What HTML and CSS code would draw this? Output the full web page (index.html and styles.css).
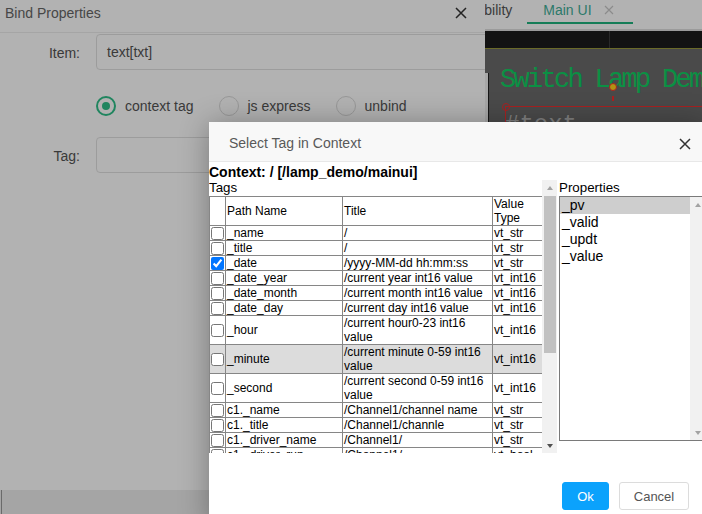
FILE: index.html
```html
<!DOCTYPE html>
<html>
<head>
<meta charset="utf-8">
<title>Bind Properties</title>
<link rel="stylesheet" href="styles.css">
</head>
<body>
<div class="app">
  <div class="tabbar">
    <div class="tab">Visibility</div>
    <div class="tab active">Main UI<svg class="tab-x" width="10" height="10" viewBox="0 0 10 10"><path d="M1 1L9 9M9 1L1 9" stroke="#c8c8c8" stroke-width="1.2"/></svg></div>
  </div>
  <div class="left-panel"><div class="left-line"></div></div>
  <div class="editor">
    <div class="toolbar"><div class="tb-left"></div><div class="tb-right"></div></div>
    <div class="canvas">
      <div class="canvas-edge"></div>
      <div class="demo-title">Switch Lamp Demo</div>
      <div class="anchor"></div>
      <div class="anchor-dash"></div>
      <div class="sel-box"></div>
      <div class="sel-handle"></div>
      <div class="demo-text">#text</div>
    </div>
  </div>
</div>

<div class="bind-dialog">
  <div class="bind-header">
    <span class="bind-title">Bind Properties</span>
    <svg class="bind-close" width="12" height="12" viewBox="0 0 12 12"><path d="M1 1L11 11M11 1L1 11" stroke="#333" stroke-width="1.5"/></svg>
  </div>
  <div class="form-row item-row">
    <span class="form-label">Item:</span>
    <div class="form-input">text[txt]</div>
  </div>
  <div class="radio-row">
    <span class="radio checked"><span class="ring"></span>context tag</span>
    <span class="radio"><span class="ring"></span>js express</span>
    <span class="radio"><span class="ring"></span>unbind</span>
  </div>
  <div class="form-row tag-row">
    <span class="form-label">Tag:</span>
    <div class="form-input"></div>
  </div>
</div>

<div class="mask"></div>

<div class="tag-dialog">
  <div class="td-header">
    <span class="td-title">Select Tag in Context</span>
    <svg class="td-close" width="12" height="12" viewBox="0 0 12 12"><path d="M1 1L11 11M11 1L1 11" stroke="#333" stroke-width="1.5"/></svg>
  </div>
  <div class="td-body">
    <div class="context-line">Context: / [/lamp_demo/mainui]</div>
    <div class="td-columns">
      <div class="tags-pane">
        <div class="tags-view">
          <div class="section-label">Tags</div>
          <table class="tag-table">
            <colgroup><col class="c-check"><col class="c-path"><col class="c-title"><col class="c-type"></colgroup>
            <thead>
              <tr><th></th><th>Path Name</th><th>Title</th><th>Value Type</th></tr>
            </thead>
            <tbody>
              <tr><td><input type="checkbox"></td><td>_name</td><td>/</td><td>vt_str</td></tr>
              <tr><td><input type="checkbox"></td><td>_title</td><td>/</td><td>vt_str</td></tr>
              <tr><td><input type="checkbox" checked></td><td>_date</td><td>/yyyy-MM-dd hh:mm:ss</td><td>vt_str</td></tr>
              <tr><td><input type="checkbox"></td><td>_date_year</td><td>/current year int16 value</td><td>vt_int16</td></tr>
              <tr><td><input type="checkbox"></td><td>_date_month</td><td>/current month int16 value</td><td>vt_int16</td></tr>
              <tr><td><input type="checkbox"></td><td>_date_day</td><td>/current day int16 value</td><td>vt_int16</td></tr>
              <tr><td><input type="checkbox"></td><td>_hour</td><td>/current hour0-23 int16 value</td><td>vt_int16</td></tr>
              <tr class="hl"><td><input type="checkbox"></td><td>_minute</td><td>/current minute 0-59 int16 value</td><td>vt_int16</td></tr>
              <tr><td><input type="checkbox"></td><td>_second</td><td>/current second 0-59 int16 value</td><td>vt_int16</td></tr>
              <tr><td><input type="checkbox"></td><td>c1._name</td><td>/Channel1/channel name</td><td>vt_str</td></tr>
              <tr><td><input type="checkbox"></td><td>c1._title</td><td>/Channel1/channle</td><td>vt_str</td></tr>
              <tr><td><input type="checkbox"></td><td>c1._driver_name</td><td>/Channel1/</td><td>vt_str</td></tr>
              <tr><td><input type="checkbox"></td><td>c1._driver_run</td><td>/Channel1/</td><td>vt_bool</td></tr>
              <tr><td><input type="checkbox"></td><td>c1._conn_st</td><td>/Channel1/</td><td>vt_bool</td></tr>
              <tr><td><input type="checkbox"></td><td>c1.d1._name</td><td>/Channel1/Device1/</td><td>vt_str</td></tr>
              <tr><td><input type="checkbox"></td><td>c1.d1._title</td><td>/Channel1/Device1/</td><td>vt_str</td></tr>
              <tr><td><input type="checkbox"></td><td>c1.d1.lamp</td><td>/Channel1/Device1/lamp</td><td>vt_bool</td></tr>
              <tr><td><input type="checkbox"></td><td>c1.d1.switch</td><td>/Channel1/Device1/switch</td><td>vt_bool</td></tr>
              <tr><td><input type="checkbox"></td><td>c1.d1.fan</td><td>/Channel1/Device1/fan</td><td>vt_bool</td></tr>
              <tr><td><input type="checkbox"></td><td>c1.d1.temp</td><td>/Channel1/Device1/temp</td><td>vt_float</td></tr>
              <tr><td><input type="checkbox"></td><td>c1.d1.level</td><td>/Channel1/Device1/level</td><td>vt_int16</td></tr>
              <tr><td><input type="checkbox"></td><td>c1.d1.alarm</td><td>/Channel1/Device1/alarm</td><td>vt_bool</td></tr>
            </tbody>
          </table>
        </div>
        <div class="vscroll">
          <div class="sb-btn"><span class="tri up dim"></span></div>
          <div class="sb-track"><div class="sb-thumb"></div></div>
          <div class="sb-btn"><span class="tri down"></span></div>
        </div>
      </div>
      <div class="props">
        <div class="section-label">Properties</div>
        <div class="props-list">
          <div class="props-options" role="listbox">
            <div class="prop selected">_pv</div>
            <div class="prop">_valid</div>
            <div class="prop">_updt</div>
            <div class="prop">_value</div>
          </div>
          <div class="vscroll props-scroll">
            <div class="sb-btn"><span class="tri up dim"></span></div>
            <div class="sb-track"></div>
            <div class="sb-btn"><span class="tri down dim"></span></div>
          </div>
        </div>
      </div>
    </div>
  </div>
  <div class="td-footer">
    <button class="btn btn-ok">Ok</button>
    <button class="btn btn-cancel">Cancel</button>
  </div>
</div>
</body>
</html>
```

FILE: styles.css
```css
* { box-sizing: border-box; }
html, body { margin: 0; padding: 0; }
body {
  width: 702px;
  height: 514px;
  overflow: hidden;
  position: relative;
  font-family: "Liberation Sans", Arial, sans-serif;
  background: #ececec;
}

/* background application */
.app {
  display: grid;
  grid-template-columns: 485px 1fr;
  grid-template-rows: 31px 1fr;
  height: 514px;
}
.tabbar {
  grid-column: 1 / -1;
  display: flex;
  align-items: flex-start;
  padding-left: 447px;
  background: #fff;
  border-bottom: 2px solid #dedede;
  font-size: 14px;
}
.tab {
  height: 24px;
  line-height: 20px;
  padding: 0 15px;
  color: #555;
  white-space: nowrap;
  display: flex;
  align-items: flex-start;
}
.tab.active {
  padding: 0 19px 0 16px;
  color: #3fae98;
  border-bottom: 2px solid #20b37e;
}
.tab-x { margin: 5px 0 0 12px; }

.left-panel {
  background: #ececec;
  padding-left: 1px;
}
.left-line {
  height: 100%;
  width: 2px;
  border-left: 1px solid #999;
}
.editor {
  display: flex;
  flex-direction: column;
}
.toolbar {
  height: 18px;
  display: flex;
  background: #1c1c1c;
  border-bottom: 1px solid #9a9a3c;
}
.tb-left { width: 125px; border-right: 1px solid #3c3c3c; }
.tb-right { flex: 1; }
.canvas {
  flex: 1;
  position: relative;
  background: #6b6b6b;
  overflow: hidden;
}
.canvas-edge {
  position: absolute;
  left: 0;
  top: 24px;
  width: 4px;
  height: 120px;
  background: #f0f0f0;
  border-right: 1px solid #222;
}
.demo-title {
  position: absolute;
  left: 15px;
  top: 16px;
  font-family: "Liberation Mono", monospace;
  font-size: 27px;
  line-height: 30px;
  letter-spacing: -2.7px;
  white-space: nowrap;
  color: #10cf62;
}
.anchor {
  position: absolute;
  left: 124px;
  top: 34px;
  width: 8px;
  height: 8px;
  border-radius: 50%;
  background: #ffd21a;
  border: 1.5px solid #f03030;
}
.anchor-dash {
  position: absolute;
  left: 127.3px;
  top: 47px;
  width: 1.5px;
  height: 5px;
  background: #f03030;
}
.sel-box {
  position: absolute;
  left: 20px;
  top: 57px;
  width: 400px;
  height: 200px;
  border-top: 1.5px solid #f03030;
  border-left: 1.5px solid #f03030;
}
.sel-handle {
  position: absolute;
  left: 16.5px;
  top: 53.5px;
  width: 8px;
  height: 8px;
  border-radius: 50%;
  border: 1.5px solid #f03030;
}
.demo-text {
  position: absolute;
  left: 20px;
  top: 64px;
  font-family: "Liberation Mono", monospace;
  font-size: 24px;
  line-height: 24px;
  color: #b8b8b8;
}

/* Bind Properties window */
.bind-dialog {
  position: absolute;
  left: 0;
  top: 0;
  width: 485px;
  height: 490px;
  background: #fff;
  overflow: hidden;
  color: #545454;
  font-size: 14px;
}
.bind-header {
  height: 33px;
  padding: 5px 18px 0 5px;
  display: flex;
  justify-content: space-between;
  align-items: flex-start;
  border-bottom: 1px solid #ececec;
}
.bind-title { line-height: 16px; color: #666; }
.bind-close { margin-top: 2px; }
.form-row {
  display: flex;
  align-items: center;
  gap: 16px;
  margin-right: -10px;
}
.item-row { margin-top: 1px; }
.tag-row { margin-top: 21px; }
.form-label {
  width: 80px;
  text-align: right;
  padding-top: 1px;
}
.form-input {
  flex: 1;
  height: 36px;
  border: 1px solid #e0e0e0;
  border-radius: 4px;
  padding: 1px 10px 0;
  line-height: 33px;
  color: #545454;
}
.radio-row {
  margin: 26px 0 0 96px;
  height: 20px;
  display: flex;
  align-items: center;
}
.radio {
  display: flex;
  align-items: center;
  gap: 9px;
  margin-right: 25px;
  line-height: 20px;
}
.ring {
  width: 20px;
  height: 20px;
  border-radius: 50%;
  border: 1px solid #dadada;
  display: flex;
  align-items: center;
  justify-content: center;
}
.radio.checked .ring { border: 2px solid #2fbf88; }
.radio.checked .ring::after {
  content: "";
  width: 8px;
  height: 8px;
  border-radius: 50%;
  background: #2fbf88;
}

.mask {
  position: absolute;
  inset: 0;
  background: rgba(0, 0, 0, 0.3);
}

/* Select Tag dialog */
.tag-dialog {
  position: absolute;
  left: 209px;
  top: 122px;
  width: 497px;
  background: #fff;
  box-shadow: 0 2px 28px rgba(0, 0, 0, 0.32);
  color: #000;
}
.td-header {
  height: 40px;
  padding: 13px 15px 0 20px;
  display: flex;
  justify-content: space-between;
  align-items: flex-start;
  background: #f8f8f8;
  border-bottom: 1px solid #e8e8e8;
}
.td-title { font-size: 14px; line-height: 16px; color: #595959; }
.td-close { margin-top: 3px; }
.td-body { padding-top: 2px; }
.context-line {
  font-size: 14px;
  font-weight: bold;
  line-height: 16px;
}
.td-columns {
  display: flex;
  gap: 2px;
  align-items: flex-start;
}
.section-label {
  font-size: 13.33px;
  line-height: 16px;
}
.tags-pane {
  width: 348px;
  height: 273px;
  display: flex;
}
.tags-view {
  flex: 1;
  overflow: hidden;
}
.tag-table {
  width: 333px;
  table-layout: fixed;
  border-collapse: collapse;
  font-size: 12px;
  line-height: 14px;
}
.c-check { width: 16px; }
.c-path { width: 117px; }
.c-title { width: 150px; }
.c-type { width: 50px; }
.tag-table th,
.tag-table td {
  border: 1px solid #868686;
  padding: 0 0 0 1px;
  font-weight: normal;
  text-align: left;
  vertical-align: middle;
}
.tag-table td:first-child,
.tag-table th:first-child { padding: 0; }
.tag-table input {
  display: block;
  width: 13px;
  height: 13px;
  margin: 0 0 0 1px;
}
.tag-table tr.hl td { background: #dcdcdc; }

/* scrollbars */
.vscroll {
  width: 15px;
  flex: none;
  display: flex;
  flex-direction: column;
  background: #f1f1f1;
}
.sb-btn {
  height: 15px;
  flex: none;
  display: flex;
  align-items: center;
  justify-content: center;
}
.sb-track { flex: 1; }
.sb-thumb {
  margin: 1px 1px 0 2px;
  height: 157px;
  background: #c1c1c1;
}
.tri {
  width: 0;
  height: 0;
  border-left: 3.5px solid transparent;
  border-right: 3.5px solid transparent;
}
.tri.up { border-bottom: 4px solid #505050; }
.tri.down { border-top: 4px solid #505050; }
.tri.up.dim { border-bottom-color: #a3a3a3; }
.tri.down.dim { border-top-color: #a3a3a3; }

.props { width: 147px; }
.props-list {
  height: 245px;
  border: 1px solid #7a7a7a;
  display: flex;
}
.props-options {
  flex: 1;
  font-size: 14px;
}
.prop {
  height: 17px;
  line-height: 17px;
  padding: 0 2px;
}
.prop.selected { background: #cecece; }

.td-footer {
  display: flex;
  justify-content: flex-end;
  gap: 10px;
  padding: 29px 17px 16px 0;
}
.btn {
  height: 28px;
  font-family: "Liberation Sans", Arial, sans-serif;
  font-size: 13px;
  border-radius: 3px;
  padding: 0;
  cursor: pointer;
}
.btn-ok {
  width: 47px;
  background: #0ba2fc;
  border: 1px solid #0ba2fc;
  color: #fff;
}
.btn-cancel {
  width: 70px;
  background: #fff;
  border: 1px solid #dcdcdc;
  color: #555;
}
```
